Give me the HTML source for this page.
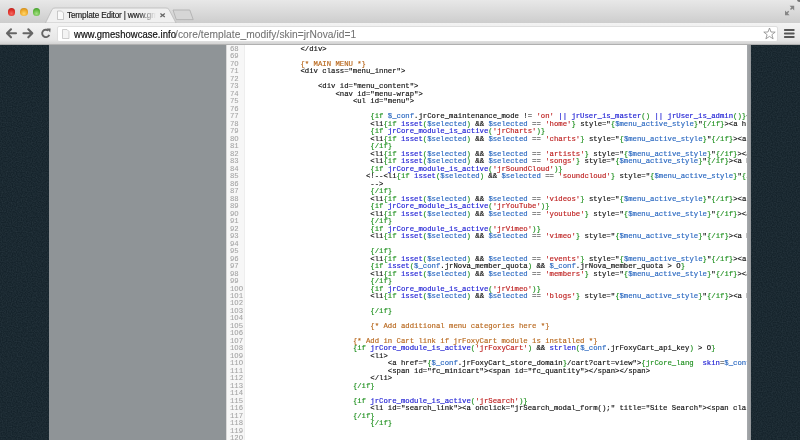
<!DOCTYPE html>
<html><head><meta charset="utf-8">
<style>
*{box-sizing:border-box}
html,body{margin:0;padding:0;width:800px;height:440px;overflow:hidden;background:#1c2830;font-family:"Liberation Sans",sans-serif}
#tabs{position:absolute;left:0;top:0;width:800px;height:23px;background:linear-gradient(#e8e8e8,#cdcdcd)}
.tl{position:absolute;top:8px;width:7.6px;height:7.6px;border-radius:50%}
#tab{position:absolute;left:46px;top:8px;width:130px;height:15px}
#toolbar{position:absolute;left:0;top:22.5px;width:800px;height:22.5px;background:linear-gradient(#f3f3f3,#e7e7e7 80%,#d2d2d2);border-bottom:1px solid #b0b0b0}
#omni{position:absolute;left:57px;top:3px;width:720.5px;height:16px;background:#fff;border:1px solid #dedede;border-radius:2px}
#url{will-change:transform;position:absolute;left:15.5px;top:1.8px;font-size:10.2px;line-height:14px;color:#727272;letter-spacing:0.06px;white-space:nowrap;-webkit-text-stroke:0.08px #727272}
#url b{font-weight:normal;color:#111}
#content{position:absolute;left:0;top:45px;width:800px;height:395px;background:#15232b}
#panel{position:absolute;left:49px;top:0;width:177px;height:395px;background:#8f9497}
#gutter{position:absolute;left:226px;top:0;width:19px;height:395px;background:#f7f7f7;border-left:1px solid #d8d8d8;border-right:1px solid #eee;overflow:hidden}
#code{position:absolute;left:245px;top:0;width:501.5px;height:395px;background:#fff;overflow:hidden}
#sbar{position:absolute;left:746.5px;top:0;width:4.5px;height:395px;background:linear-gradient(90deg,#a6a9ac,#94979a)}
.mono{font-family:"Liberation Mono",monospace;font-size:7.29px;line-height:7.48px;white-space:pre}
#gutter .mono{will-change:transform;position:absolute;left:3.4px;top:0.5px;color:#a2a2a2;-webkit-text-stroke:0.06px currentColor}
#code .mono{will-change:transform;position:absolute;left:3.3px;top:0.8px;color:#111;-webkit-text-stroke:0.16px currentColor}
.g{color:#1f901f}.b{color:#2a68c0}.v{color:#2020d4}.r{color:#bd1e1e}.k{color:#111}.c{color:#b8681e}
</style></head><body>
<div id="tabs">
  <div class="tl" style="left:7.5px;top:8px;background:radial-gradient(circle at 50% 70%,#f36a62 0,#e2332c 50%,#b81d18 90%,#9a1a16 100%)"></div>
  <div class="tl" style="left:20px;top:8px;background:radial-gradient(circle at 50% 70%,#ffd56a 0,#efab2c 50%,#c9861a 90%,#a66c14 100%)"></div>
  <div class="tl" style="left:32.5px;top:8px;background:radial-gradient(circle at 50% 70%,#a6e086 0,#67bd45 50%,#3f9a2a 90%,#2e7c1e 100%)"></div>
  <svg style="position:absolute;left:0;top:0" width="800" height="23">
    <path d="M45.5 23 L52 9.5 Q53 8 55 8 L166 8 Q168 8 169 9.5 L176 23 Z" fill="#f0f0f0" stroke="#b9b9b9" stroke-width="0.8"/>
    <path d="M173 10 L189.8 10 L193.2 19.6 L176.3 19.6 Z" fill="#d6d6d6" stroke="#acacac" stroke-width="0.8"/>
    <path d="M57.5 11 h4 l2 2 v6.5 h-6 z" fill="#fafafa" stroke="#aaa" stroke-width="0.6"/>
    <path d="M160.4 13.4 l4.4 3.6 M164.8 13.4 l-4.4 3.6" stroke="#666" stroke-width="1.25"/>
    <path d="M786.5 13.5 l2.2 -2.2 M790.5 9.5 l2.2 -2.2" stroke="#858585" stroke-width="1.4" fill="none"/><path d="M794.2 5.8 h-4.6 L794.2 10.4 z M785 15.2 v-4.6 L789.6 15.2 z" fill="#858585"/>
  </svg>
  <div style="will-change:transform;-webkit-text-stroke:0.15px #1a1a1a;position:absolute;left:67px;top:9.5px;font-size:8.3px;line-height:10px;color:#1a1a1a;letter-spacing:-0.2px;white-space:nowrap;width:89px;overflow:hidden;-webkit-mask-image:linear-gradient(90deg,#000 80%,transparent)">Template Editor | www.gmeshowcase.info</div>
</div>
<div style="position:absolute;left:797px;top:-3px;width:5px;height:5px;border-radius:50%;background:#555;opacity:.8"></div>
<div id="toolbar">
  <svg style="position:absolute;left:0;top:-22.5px" width="58" height="45">
    <path d="M7.2 33.3 H16 M11 29.3 L7 33.3 L11 37.3" stroke="#666" stroke-width="2.1" fill="none" stroke-linejoin="round" stroke-linecap="round"/>
    <path d="M23.5 33.3 H32.2 M28.3 29.3 L32.3 33.3 L28.3 37.3" stroke="#666" stroke-width="2.1" fill="none" stroke-linejoin="round" stroke-linecap="round"/>
    <path d="M49.3 34.8 A3.7 3.7 0 1 1 48.3 30.6" stroke="#666" stroke-width="1.9" fill="none"/>
    <path d="M46.6 28.6 L50.6 28.4 L50.3 32.4 Z" fill="#666"/>
  </svg>
  <div id="omni">
    <svg style="position:absolute;left:3px;top:1px" width="10" height="12"><path d="M1.5 1.5 h4.5 l2 2 v7 h-6.5 z" fill="#f4f4f4" stroke="#bbb" stroke-width="0.7"/></svg>
    <div id="url"><b style="display:inline-block;transform:scaleX(0.928);transform-origin:0 0;margin-right:-8.9px;-webkit-text-stroke:0.2px #111">www.gmeshowcase.info</b>/core/template_modify/skin=jrNova/id=1</div>
    <svg style="position:absolute;left:704.5px;top:0px" width="14" height="13"><path d="M6.5 1 L8 5 L12.2 5.1 L8.9 7.7 L10.1 11.8 L6.5 9.4 L2.9 11.8 L4.1 7.7 L0.8 5.1 L5 5 Z" fill="#fff" stroke="#888" stroke-width="0.8"/></svg>
  </div>
  <svg style="position:absolute;left:782px;top:0" width="16" height="20"><path d="M2.8 7 h9 M2.8 10.5 h9 M2.8 14 h9" stroke="#555" stroke-width="1.8" stroke-linecap="round"/></svg>
</div>
<div id="content">
  <svg style="position:absolute;left:0;top:0" width="800" height="395"><filter id="nz" x="0" y="0" width="100%" height="100%"><feTurbulence type="fractalNoise" baseFrequency="0.8" numOctaves="1" seed="3"/><feColorMatrix type="matrix" values="0 0 0 0 0.16  0 0 0 0 0.22  0 0 0 0 0.26  0 0 0 0.9 -0.25"/></filter><rect width="800" height="395" filter="url(#nz)" opacity="0.35"/></svg>
  <div id="panel"></div>
  <div id="gutter"><div class="mono"><div>68</div><div>69</div><div>7O</div><div>71</div><div>72</div><div>73</div><div>74</div><div>75</div><div>76</div><div>77</div><div>78</div><div>79</div><div>8O</div><div>81</div><div>82</div><div>83</div><div>84</div><div>85</div><div>86</div><div>87</div><div>88</div><div>89</div><div>9O</div><div>91</div><div>92</div><div>93</div><div>94</div><div>95</div><div>96</div><div>97</div><div>98</div><div>99</div><div>1OO</div><div>1O1</div><div>1O2</div><div>1O3</div><div>1O4</div><div>1O5</div><div>1O6</div><div>1O7</div><div>1O8</div><div>1O9</div><div>11O</div><div>111</div><div>112</div><div>113</div><div>114</div><div>115</div><div>116</div><div>117</div><div>118</div><div>119</div><div>12O</div><div>121</div></div></div>
  <div id="code"><div class="mono"><div>            <span class="k">&lt;/div&gt;</span></div><div> </div><div>            <span class="c">{* MAIN MENU *}</span></div><div>            <span class="k">&lt;div class="menu_inner"&gt;</span></div><div> </div><div>                <span class="k">&lt;div id="menu_content"&gt;</span></div><div>                    <span class="k">&lt;nav id="menu-wrap"&gt;</span></div><div>                        <span class="k">&lt;ul id="menu"&gt;</span></div><div> </div><div>                            <span class="g">{if </span><span class="b">$_conf</span><span class="k">.jrCore_maintenance_mode != </span><span class="r">'on'</span><span class="v"> || jrUser_is_master</span><span class="g">()</span><span class="v"> || jrUser_is_admin</span><span class="g">()}</span><span class="k">&lt;a h</span></div><div>                            <span class="k">&lt;li</span><span class="g">{if </span><span class="v">isset</span><span class="g">(</span><span class="b">$selected</span><span class="g">)</span><span class="k"> &amp;&amp; </span><span class="b">$selected</span><span class="k"> == </span><span class="r">'home'</span><span class="g">}</span><span class="k"> style="</span><span class="g">{</span><span class="b">$menu_active_style</span><span class="g">}</span><span class="k">"</span><span class="g">{/if}</span><span class="k">&gt;&lt;a href</span></div><div>                            <span class="g">{if </span><span class="v">jrCore_module_is_active</span><span class="g">(</span><span class="r">'jrCharts'</span><span class="g">)}</span></div><div>                            <span class="k">&lt;li</span><span class="g">{if </span><span class="v">isset</span><span class="g">(</span><span class="b">$selected</span><span class="g">)</span><span class="k"> &amp;&amp; </span><span class="b">$selected</span><span class="k"> == </span><span class="r">'charts'</span><span class="g">}</span><span class="k"> style="</span><span class="g">{</span><span class="b">$menu_active_style</span><span class="g">}</span><span class="k">"</span><span class="g">{/if}</span><span class="k">&gt;&lt;a href</span></div><div>                            <span class="g">{/if}</span></div><div>                            <span class="k">&lt;li</span><span class="g">{if </span><span class="v">isset</span><span class="g">(</span><span class="b">$selected</span><span class="g">)</span><span class="k"> &amp;&amp; </span><span class="b">$selected</span><span class="k"> == </span><span class="r">'artists'</span><span class="g">}</span><span class="k"> style="</span><span class="g">{</span><span class="b">$menu_active_style</span><span class="g">}</span><span class="k">"</span><span class="g">{/if}</span><span class="k">&gt;&lt;a href</span></div><div>                            <span class="k">&lt;li</span><span class="g">{if </span><span class="v">isset</span><span class="g">(</span><span class="b">$selected</span><span class="g">)</span><span class="k"> &amp;&amp; </span><span class="b">$selected</span><span class="k"> == </span><span class="r">'songs'</span><span class="g">}</span><span class="k"> style="</span><span class="g">{</span><span class="b">$menu_active_style</span><span class="g">}</span><span class="k">"</span><span class="g">{/if}</span><span class="k">&gt;&lt;a href</span></div><div>                            <span class="g">{if </span><span class="v">jrCore_module_is_active</span><span class="g">(</span><span class="r">'jrSoundCloud'</span><span class="g">)}</span></div><div>                           <span class="k">&lt;!--</span><span class="k">&lt;li</span><span class="g">{if </span><span class="v">isset</span><span class="g">(</span><span class="b">$selected</span><span class="g">)</span><span class="k"> &amp;&amp; </span><span class="b">$selected</span><span class="k"> == </span><span class="r">'soundcloud'</span><span class="g">}</span><span class="k"> style="</span><span class="g">{</span><span class="b">$menu_active_style</span><span class="g">}</span><span class="k">"</span><span class="g">{/if}</span><span class="k">&gt;&lt;a href</span></div><div>                            <span class="k">--&gt;</span></div><div>                            <span class="g">{/if}</span></div><div>                            <span class="k">&lt;li</span><span class="g">{if </span><span class="v">isset</span><span class="g">(</span><span class="b">$selected</span><span class="g">)</span><span class="k"> &amp;&amp; </span><span class="b">$selected</span><span class="k"> == </span><span class="r">'videos'</span><span class="g">}</span><span class="k"> style="</span><span class="g">{</span><span class="b">$menu_active_style</span><span class="g">}</span><span class="k">"</span><span class="g">{/if}</span><span class="k">&gt;&lt;a href</span></div><div>                            <span class="g">{if </span><span class="v">jrCore_module_is_active</span><span class="g">(</span><span class="r">'jrYouTube'</span><span class="g">)}</span></div><div>                            <span class="k">&lt;li</span><span class="g">{if </span><span class="v">isset</span><span class="g">(</span><span class="b">$selected</span><span class="g">)</span><span class="k"> &amp;&amp; </span><span class="b">$selected</span><span class="k"> == </span><span class="r">'youtube'</span><span class="g">}</span><span class="k"> style="</span><span class="g">{</span><span class="b">$menu_active_style</span><span class="g">}</span><span class="k">"</span><span class="g">{/if}</span><span class="k">&gt;&lt;a href</span></div><div>                            <span class="g">{/if}</span></div><div>                            <span class="g">{if </span><span class="v">jrCore_module_is_active</span><span class="g">(</span><span class="r">'jrVimeo'</span><span class="g">)}</span></div><div>                            <span class="k">&lt;li</span><span class="g">{if </span><span class="v">isset</span><span class="g">(</span><span class="b">$selected</span><span class="g">)</span><span class="k"> &amp;&amp; </span><span class="b">$selected</span><span class="k"> == </span><span class="r">'vimeo'</span><span class="g">}</span><span class="k"> style="</span><span class="g">{</span><span class="b">$menu_active_style</span><span class="g">}</span><span class="k">"</span><span class="g">{/if}</span><span class="k">&gt;&lt;a href</span></div><div> </div><div>                            <span class="g">{/if}</span></div><div>                            <span class="k">&lt;li</span><span class="g">{if </span><span class="v">isset</span><span class="g">(</span><span class="b">$selected</span><span class="g">)</span><span class="k"> &amp;&amp; </span><span class="b">$selected</span><span class="k"> == </span><span class="r">'events'</span><span class="g">}</span><span class="k"> style="</span><span class="g">{</span><span class="b">$menu_active_style</span><span class="g">}</span><span class="k">"</span><span class="g">{/if}</span><span class="k">&gt;&lt;a href</span></div><div>                            <span class="g">{if </span><span class="v">isset</span><span class="g">(</span><span class="b">$_conf</span><span class="k">.jrNova_member_quota</span><span class="g">)</span><span class="k"> &amp;&amp; </span><span class="b">$_conf</span><span class="k">.jrNova_member_quota &gt; O</span><span class="g">}</span></div><div>                            <span class="k">&lt;li</span><span class="g">{if </span><span class="v">isset</span><span class="g">(</span><span class="b">$selected</span><span class="g">)</span><span class="k"> &amp;&amp; </span><span class="b">$selected</span><span class="k"> == </span><span class="r">'members'</span><span class="g">}</span><span class="k"> style="</span><span class="g">{</span><span class="b">$menu_active_style</span><span class="g">}</span><span class="k">"</span><span class="g">{/if}</span><span class="k">&gt;&lt;a href</span></div><div>                            <span class="g">{/if}</span></div><div>                            <span class="g">{if </span><span class="v">jrCore_module_is_active</span><span class="g">(</span><span class="r">'jrVimeo'</span><span class="g">)}</span></div><div>                            <span class="k">&lt;li</span><span class="g">{if </span><span class="v">isset</span><span class="g">(</span><span class="b">$selected</span><span class="g">)</span><span class="k"> &amp;&amp; </span><span class="b">$selected</span><span class="k"> == </span><span class="r">'blogs'</span><span class="g">}</span><span class="k"> style="</span><span class="g">{</span><span class="b">$menu_active_style</span><span class="g">}</span><span class="k">"</span><span class="g">{/if}</span><span class="k">&gt;&lt;a href</span></div><div> </div><div>                            <span class="g">{/if}</span></div><div> </div><div>                            <span class="c">{* Add additional menu categories here *}</span></div><div> </div><div>                        <span class="c">{* Add in Cart link if jrFoxyCart module is installed *}</span></div><div>                        <span class="g">{if </span><span class="v">jrCore_module_is_active</span><span class="g">(</span><span class="r">'jrFoxyCart'</span><span class="g">)</span><span class="k"> &amp;&amp; </span><span class="v">strlen</span><span class="g">(</span><span class="b">$_conf</span><span class="k">.jrFoxyCart_api_key</span><span class="g">)</span><span class="k"> &gt; O</span><span class="g">}</span></div><div>                            <span class="k">&lt;li&gt;</span></div><div>                                <span class="k">&lt;a href="</span><span class="g">{</span><span class="b">$_conf</span><span class="k">.jrFoxyCart_store_domain</span><span class="g">}</span><span class="k">/cart?cart=view"&gt;</span><span class="g">{jrCore_lang  </span><span class="v">skin</span><span class="k">=</span><span class="b">$_conf.jrNova</span></div><div>                                <span class="k">&lt;span id="fc_minicart"&gt;&lt;span id="fc_quantity"&gt;&lt;/span&gt;&lt;/span&gt;</span></div><div>                            <span class="k">&lt;/li&gt;</span></div><div>                        <span class="g">{/if}</span></div><div> </div><div>                        <span class="g">{if </span><span class="v">jrCore_module_is_active</span><span class="g">(</span><span class="r">'jrSearch'</span><span class="g">)}</span></div><div>                            <span class="k">&lt;li id="search_link"&gt;&lt;a onclick="jrSearch_modal_form();" title="Site Search"&gt;&lt;span class="sprite"&gt;</span></div><div>                        <span class="g">{/if}</span></div><div>                            <span class="g">{/if}</span></div><div> </div><div> </div><div> </div></div></div>
  <div id="sbar"></div>
</div>
</body></html>
